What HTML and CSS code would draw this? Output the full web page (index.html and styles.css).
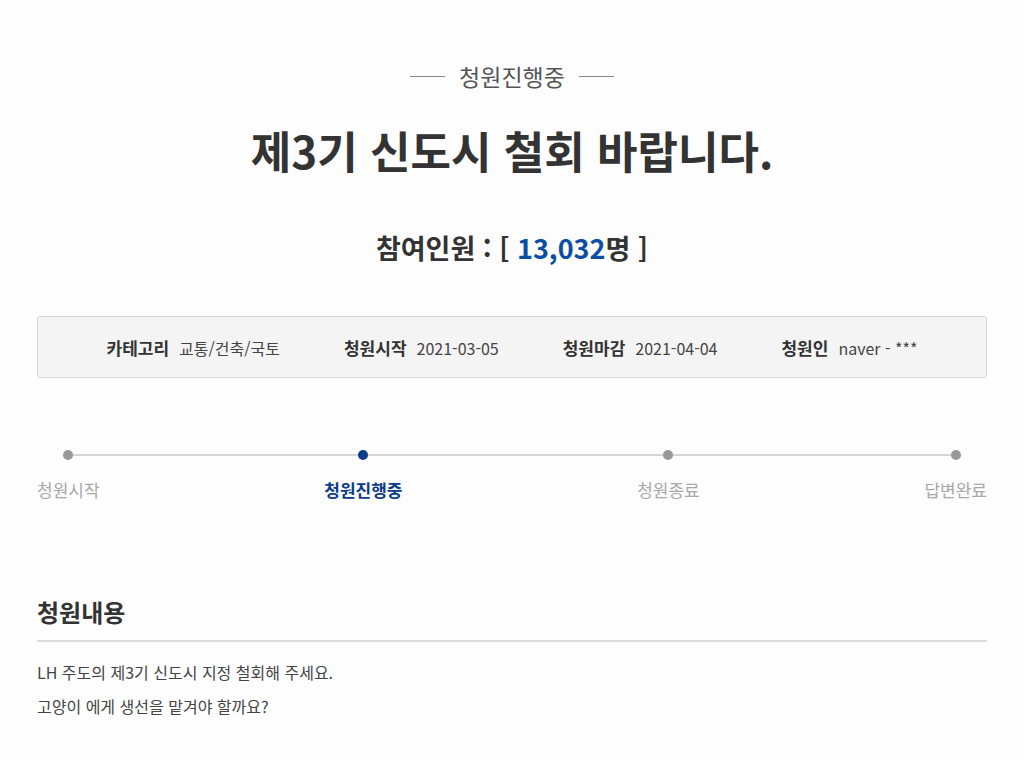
FILE: index.html
```html
<!DOCTYPE html>
<html lang="ko">
<head>
    <meta charset="UTF-8">
    <meta name="viewport" content="width=device-width, initial-scale=1.0">
    <title>청원 상세</title>
    <link rel="stylesheet" href="styles.css">
</head>
<body>

<div class="wrap">

    <div class="state">청원진행중</div>

    <h1 class="title">제3기 신도시 철회 바랍니다.</h1>

    <div class="count">참여인원 : [ <span class="num">13,032</span>명 ]</div>

    <ul class="info">
        <li><strong>카테고리</strong>교통/건축/국토</li>
        <li><strong>청원시작</strong>2021-03-05</li>
        <li><strong>청원마감</strong>2021-04-04</li>
        <li><strong>청원인</strong>naver - ***</li>
    </ul>

    <ol class="steps">
        <li><span class="dot"></span>청원시작</li>
        <li class="on"><span class="dot"></span>청원진행중</li>
        <li><span class="dot"></span>청원종료</li>
        <li><span class="dot"></span>답변완료</li>
    </ol>

    <div class="content">
        <h2>청원내용</h2>
        <div class="body">
            LH 주도의 제3기 신도시 지정 철회해 주세요.<br>
            고양이 에게 생선을 맡겨야 할까요?
        </div>
    </div>

</div>

</body>
</html>
```

FILE: styles.css
```css
body {
    margin: 0;
    background-color: #fdfdfd;
    font-family: "Noto Sans CJK KR", "Noto Sans", sans-serif;
    color: #333;
}

.wrap {
    width: 950px;
    margin: 0 auto;
    padding-top: 60px;
}

.state {
    display: flex;
    justify-content: center;
    align-items: center;
    gap: 14px;
    font-size: 23px;
    line-height: 32px;
    color: #555;
}

.state::before,
.state::after {
    content: "";
    width: 35px;
    height: 1px;
    background-color: #888;
}

.title {
    margin: 30px 0 0;
    text-align: center;
    font-size: 44px;
    line-height: 56px;
    font-weight: bold;
    color: #333;
}

.count {
    margin-top: 50px;
    text-align: center;
    font-size: 27px;
    line-height: 40px;
    font-weight: bold;
    color: #333;
}

.count .num {
    color: #0b4ea2;
}

.info {
    list-style: none;
    margin: 48px 0 0;
    padding: 0;
    height: 60px;
    display: flex;
    justify-content: center;
    align-items: center;
    gap: 64px;
    background-color: #f4f4f4;
    border: 1px solid #d8d8d8;
    border-radius: 3px;
    font-size: 16px;
    color: #444;
}

.info strong {
    margin-right: 10px;
    font-size: 17px;
    color: #333;
}

.steps {
    position: relative;
    list-style: none;
    margin: 72px 0 0;
    padding: 0;
    display: flex;
    justify-content: space-between;
}

.steps::before {
    content: "";
    position: absolute;
    top: 4px;
    left: 30px;
    right: 32px;
    height: 2px;
    background-color: #d6d6d6;
}

.steps li {
    position: relative;
    display: flex;
    flex-direction: column;
    align-items: center;
    gap: 18px;
    font-size: 17px;
    line-height: 24px;
    color: #a8a8a8;
}

.steps .dot {
    width: 10px;
    height: 10px;
    border-radius: 50%;
    background-color: #999;
}

.steps li.on {
    margin-right: 10px;
    color: #0b3c8c;
    font-weight: bold;
}

.steps li.on .dot {
    background-color: #0b3c8c;
}

.content {
    margin-top: 93px;
}

.content h2 {
    margin: 0;
    padding-bottom: 11px;
    font-size: 24px;
    line-height: 34px;
    font-weight: bold;
    color: #333;
    border-bottom: 2px solid #ddd;
}

.content .body {
    padding-top: 13px;
    font-size: 16px;
    line-height: 34px;
    color: #444;
}
```
